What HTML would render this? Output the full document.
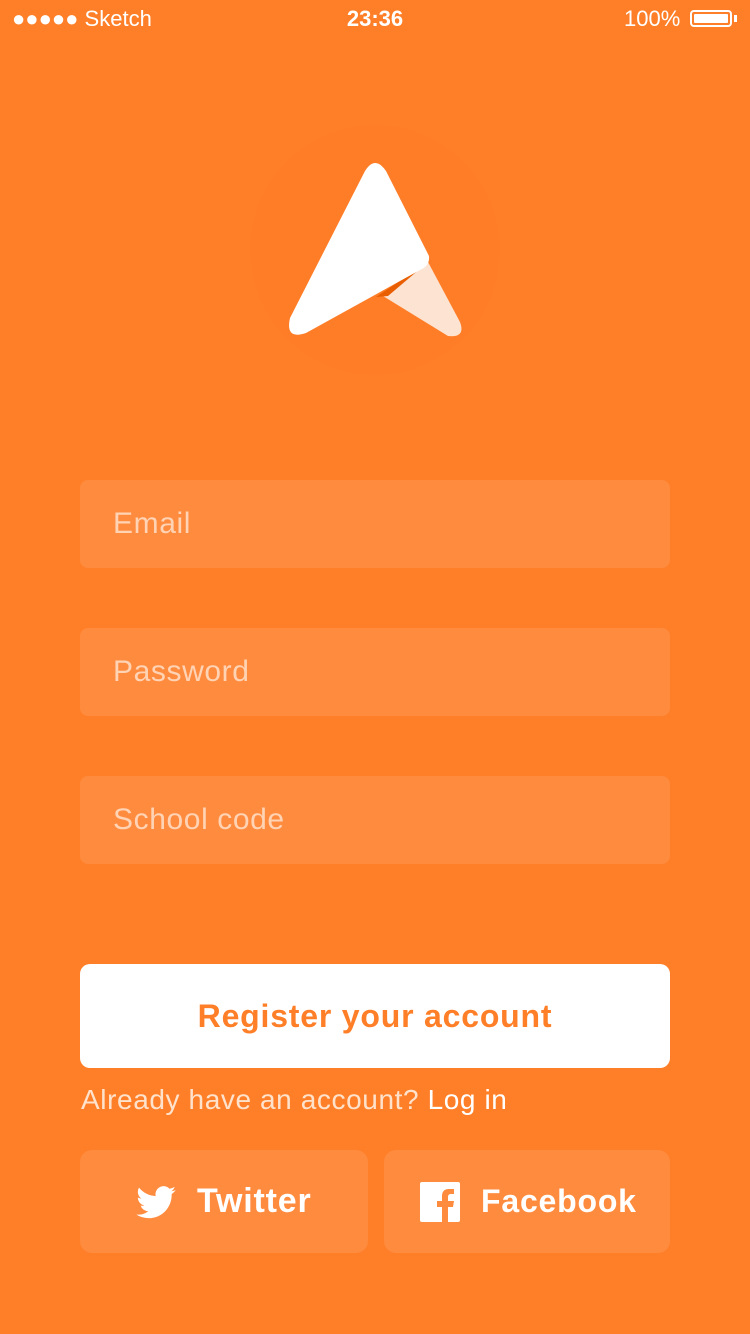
<!DOCTYPE html>
<html><head><meta charset="utf-8"><style>
body{margin:0;width:750px;height:1334px;background:#FF7F28;font-family:"Liberation Sans",sans-serif;position:relative;overflow:hidden;color:#fff}
.a{position:absolute}
.f{position:absolute;left:80px;width:590px;height:88px;background:#FF8B3F;border-radius:8px;color:#FFD3B4;font-size:30px;letter-spacing:0.6px;line-height:88px;text-indent:33px}
.b{position:absolute;top:1150px;height:103px;background:#FF8B3F;border-radius:12px;font-size:32px;letter-spacing:0.8px;font-weight:bold;line-height:103px}
</style></head><body>
<div class="a" style="top:6px;left:12px;font-size:22px">●●●●● Sketch</div>
<div class="a" style="top:6px;left:0;width:750px;text-align:center;font-size:22px;font-weight:bold">23:36</div>
<div class="a" style="top:6px;left:624px;font-size:22px">100%</div>
<div class="a" style="top:10px;left:690px;width:42px;height:17px;border:2px solid #fff;border-radius:4px;box-sizing:border-box;padding:2px"><div style="background:#fff;height:100%;border-radius:1px"></div></div>
<div class="a" style="top:15px;left:734px;width:3px;height:7px;background:#fff"></div>
<svg class="a" style="left:0;top:0" width="750" height="420">
<circle cx="375" cy="250" r="125" fill="#FF7B24" opacity="0.35"/>
<path d="M383 296 L428 262 L460 322 Q466 338 448 336 Z" fill="#FDE3D1"/>
<path d="M376 297 L428 262 L388 296 Z" fill="#E85E00"/>
<path d="M365 171 Q375 155 386 171 L429 256 Q430 266 420 270 L306 333 Q285 340 290 318 Z" fill="#fff"/>
</svg>
<div class="f" style="top:480px">Email</div>
<div class="f" style="top:628px">Password</div>
<div class="f" style="top:776px">School code</div>
<div class="a" style="left:80px;top:964px;width:590px;height:104px;background:#fff;border-radius:10px;color:#FF7F28;font-size:32px;letter-spacing:0.8px;font-weight:bold;text-align:center;line-height:104px">Register your account</div>
<div class="a" style="left:81px;top:1084px;font-size:28px;letter-spacing:0.6px;color:#FFE2CC">Already have an account? <span style="color:#fff">Log in</span></div>
<div class="b" style="left:80px;width:288px">
<svg class="a" style="left:56px;top:36px" width="40" height="33" viewBox="0 0 24 20"><path d="M24 2.4a9.8 9.8 0 0 1-2.8.8A4.9 4.9 0 0 0 23.3.5a9.9 9.9 0 0 1-3.1 1.2A4.9 4.9 0 0 0 11.8 6.1 14 14 0 0 1 1.7 1 4.9 4.9 0 0 0 3.2 7.6a4.9 4.9 0 0 1-2.2-.6 4.9 4.9 0 0 0 3.9 4.8 4.9 4.9 0 0 1-2.2.1 4.9 4.9 0 0 0 4.6 3.4A9.9 9.9 0 0 1 0 17.3 14 14 0 0 0 7.5 19.5c9 0 14-7.5 14-14v-.6A10 10 0 0 0 24 2.4z" fill="#fff"/></svg>
<span class="a" style="left:117px;top:0;font-size:34px">Twitter</span></div>
<div class="b" style="left:384px;width:286px">
<svg class="a" style="left:36px;top:32px" width="40" height="40" viewBox="0 0 40 40"><rect width="40" height="40" rx="2" fill="#fff"/><path d="M28 40V25h5l1-6h-6v-4c0-2 1-3 3-3h3V7h-5c-5 0-7 3-7 7v5h-5v6h5v15z" fill="#FF8B3F"/></svg>
<span class="a" style="left:97px;top:0">Facebook</span></div>
</body></html>
